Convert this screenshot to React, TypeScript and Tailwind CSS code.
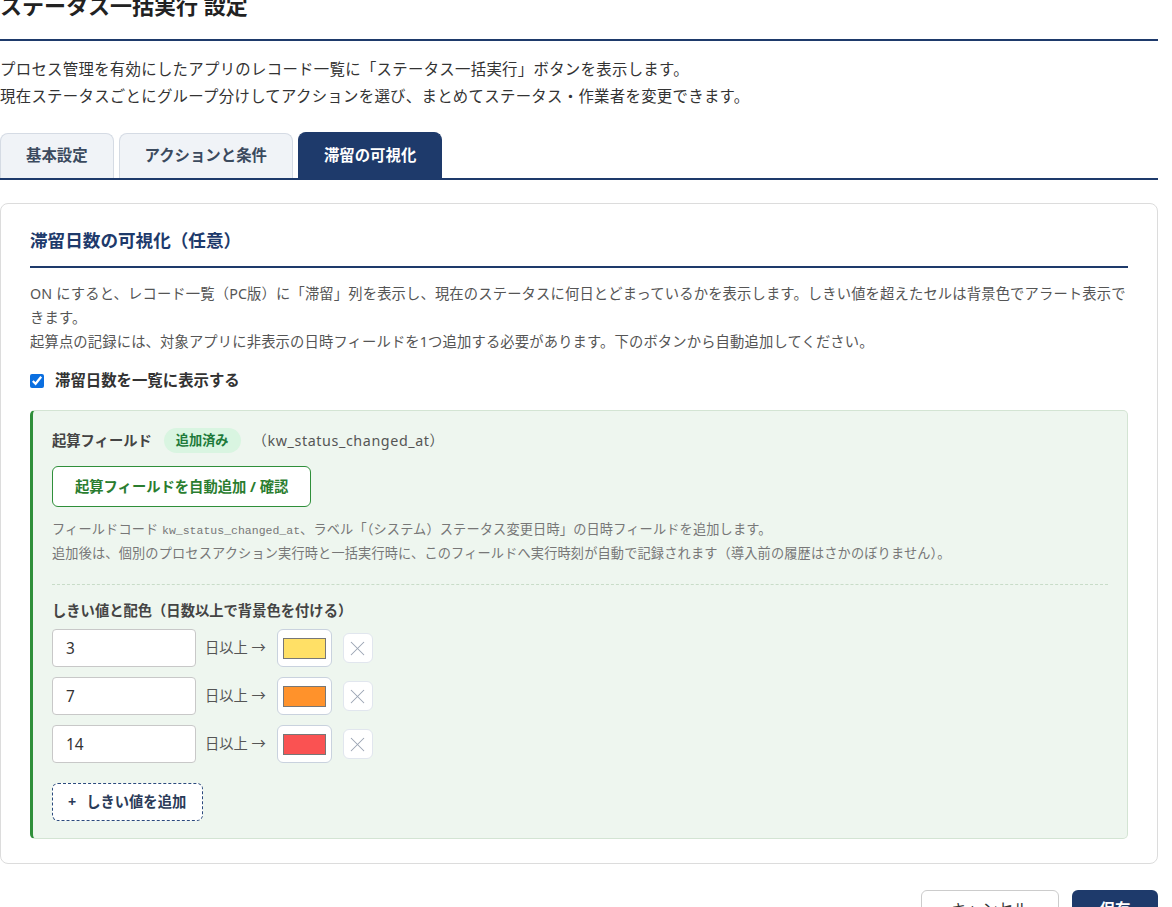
import { X } from "lucide-react";

const thresholds = [
  { days: "3", swatch: "bg-[#ffe066]" },
  { days: "7", swatch: "bg-[#ff922b]" },
  { days: "14", swatch: "bg-[#fa5252]" },
];

const tabs = [
  { label: "基本設定", active: false },
  { label: "アクションと条件", active: false },
  { label: "滞留の可視化", active: true },
];

export default function App() {
  return (
    <div className="h-[907px] overflow-hidden bg-white">
      <div className="w-[1158px] font-['Noto_Sans','Noto_Sans_CJK_JP',sans-serif] text-[#333]">
        <h1 className="-mt-[10px] border-b-2 border-[#1e3a6b] pb-[19px] text-[22px] font-bold leading-[30px] text-[#222]">
          ステータス一括実行 設定
        </h1>

        <div className="mt-[15px] text-[15.4px] leading-[27px] tracking-[0.3px] text-[#333]">
          <p>プロセス管理を有効にしたアプリのレコード一覧に「ステータス一括実行」ボタンを表示します。</p>
          <p>現在ステータスごとにグループ分けしてアクションを選び、まとめてステータス・作業者を変更できます。</p>
        </div>

        <div className="mt-[22px] flex items-end gap-[5px] border-b-2 border-[#1e3a6b]">
          {tabs.map((tab) => (
            <button
              key={tab.label}
              className={
                tab.active
                  ? "h-[46px] rounded-t-[8px] border border-b-0 border-[#1e3a6b] bg-[#1e3a6b] px-[25px] text-[15.4px] font-bold leading-[44px] text-white"
                  : "h-[45px] rounded-t-[8px] border border-b-0 border-[#d5dbe4] bg-[#f0f3f7] px-[25px] text-[15.4px] font-bold leading-[44px] text-[#3b4a5e]"
              }
            >
              {tab.label}
            </button>
          ))}
        </div>

        <section className="mt-[23px] rounded-[8px] border border-[#dcdcdc] px-[29px] pb-[24px] pt-[23px]">
          <h2 className="border-b-2 border-[#1e3a6b] pb-[13px] text-[17.6px] font-bold leading-[26px] text-[#1e3a6b]">
            滞留日数の可視化（任意）
          </h2>

          <div className="mt-[14px] text-[14.3px] leading-[24px] tracking-[0.15px] text-[#555]">
            <p>
              ON にすると、レコード一覧（PC版）に「滞留」列を表示し、現在のステータスに何日とどまっているかを表示します。しきい値を超えたセルは背景色でアラート表示できます。
            </p>
            <p>起算点の記録には、対象アプリに非表示の日時フィールドを1つ追加する必要があります。下のボタンから自動追加してください。</p>
          </div>

          <label className="mt-[17px] flex h-[20px] items-center gap-[11px]">
            <input type="checkbox" defaultChecked className="h-[14px] w-[14px] accent-[#0b6fe0]" />
            <span className="text-[15.4px] font-bold text-[#333]">滞留日数を一覧に表示する</span>
          </label>

          <div className="mt-[19px] rounded-[5px] border border-l-[3px] border-[#d3e4d3] border-l-[#2f8f3a] bg-[#eef6ef] px-[19px] pb-[17px] pt-[17px]">
            <div className="flex h-[25px] items-center gap-[12px]">
              <span className="text-[14.3px] font-bold text-[#444]">起算フィールド</span>
              <span className="h-[25px] rounded-full bg-[#d9f5e1] px-[12px] text-[13.2px] font-bold leading-[25px] text-[#1d7a3a]">
                追加済み
              </span>
              <span className="text-[14.3px] tracking-[0.6px] text-[#555]">（kw_status_changed_at）</span>
            </div>

            <button className="mt-[13px] h-[41px] rounded-[6px] border border-[#2f8f3a] bg-white px-[22px] text-[14.3px] font-bold text-[#2a7d2f]">
              起算フィールドを自動追加 / 確認
            </button>

            <div className="mt-[11px] text-[13.2px] leading-[22px] tracking-[0.15px] text-[#777]">
              <p>
                フィールドコード <code className="font-['Liberation_Mono',monospace] text-[11.5px] tracking-normal">kw_status_changed_at</code>
                、ラベル「（システム）ステータス変更日時」の日時フィールドを追加します。
              </p>
              <p>追加後は、個別のプロセスアクション実行時と一括実行時に、このフィールドへ実行時刻が自動で記録されます（導入前の履歴はさかのぼりません）。</p>
            </div>

            <div className="mt-[20px] border-t border-dashed border-[#c8dcc8]" />

            <p className="mt-[16px] text-[14.3px] font-bold leading-[20px] text-[#444]">
              しきい値と配色（日数以上で背景色を付ける）
            </p>

            <div className="mt-[8px] flex flex-col gap-[10px]">
              {thresholds.map((row) => (
                <div key={row.days} className="flex h-[38px] items-center gap-[11px]">
                  <input
                    type="text"
                    defaultValue={row.days}
                    className="h-[38px] w-[144px] rounded-[4px] border border-[#c8c8c8] bg-white px-[13px] text-[15.4px] text-[#333] outline-none"
                  />
                  <span className="-ml-[2px] text-[14.3px] text-[#555]">日以上 →</span>
                  <div className="flex h-[38px] w-[55px] items-center justify-center rounded-[6px] border border-[#c9d2de] bg-white">
                    <div className={`h-[21px] w-[43px] border border-[#777] ${row.swatch}`} />
                  </div>
                  <button className="flex h-[30px] w-[30px] items-center justify-center rounded-[6px] border border-[#e1e6ee] bg-white text-[#9aa3b2]">
                    <X size={25} strokeWidth={1} />
                  </button>
                </div>
              ))}
            </div>

            <button className="mt-[20px] flex h-[38px] items-center gap-[10px] rounded-[6px] border border-dashed border-[#2b4a7d] bg-white pl-[15px] pr-[16px] text-[14.3px] font-bold text-[#2a3b58]">
              <span>+</span>
              <span>しきい値を追加</span>
            </button>
          </div>
        </section>

        <div className="mt-[26px] flex justify-end gap-[13px]">
          <button className="h-[40px] w-[138px] rounded-[6px] border border-[#cccccc] bg-white text-[15.4px] text-[#333]">
            キャンセル
          </button>
          <button className="h-[40px] w-[86px] rounded-[6px] bg-[#1e3a6b] text-[15.4px] font-bold text-white">保存</button>
        </div>
      </div>
    </div>
  );
}
